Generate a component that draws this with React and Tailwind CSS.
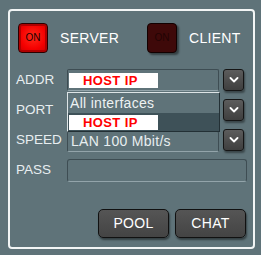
import React from 'react'

const FONT = "font-['Liberation_Sans',Arial,sans-serif]"

function OnButton({ active }) {
  return active ? (
    <div className="w-[30px] h-[30px] rounded-[4px] border border-[#2a0000] bg-[radial-gradient(circle_at_50%_45%,#ff2a1a_0%,#f50000_60%,#c80000_100%)] shadow-[inset_0_0_0_2px_#b00000] flex items-center justify-center">
      <span className="text-[10px] text-[#1a0000] leading-none">ON</span>
    </div>
  ) : (
    <div className="w-[30px] h-[30px] rounded-[4px] border border-[#120000] bg-[#3e0909] shadow-[2px_2px_2px_rgba(0,0,0,0.45)] flex items-center justify-center">
      <span className="text-[10px] text-[#220404] leading-none">ON</span>
    </div>
  )
}

function ArrowButton() {
  return (
    <div className="ml-[4px] w-[21px] h-[22px] rounded-[3px] border border-[#151515] bg-[linear-gradient(#5c5c5c,#3f3f3f)] shadow-[1px_2px_2px_rgba(0,0,0,0.4)] flex items-center justify-center">
      <svg width="10" height="6" viewBox="0 0 10 6">
        <path d="M1.5 1 L5 4.5 L8.5 1" fill="none" stroke="#ffffff" strokeWidth="1.8" strokeLinecap="round" strokeLinejoin="round" />
      </svg>
    </div>
  )
}

function HostIp() {
  return (
    <div className="w-[89px] h-[15px] bg-white flex items-center pl-[14px]">
      <span className="text-[13px] font-bold text-[#ff0000] tracking-[0.4px] leading-none">HOST IP</span>
    </div>
  )
}

function Field({ className, children }) {
  return (
    <div className={`border border-[#3e4d53] border-b-[#93a4aa] rounded-[2px] flex items-center ${className}`}>
      {children}
    </div>
  )
}

function Label({ children }) {
  return <span className="w-[51px] text-[13.5px] text-[#e8eef0]">{children}</span>
}

function PanelButton({ children }) {
  return (
    <button className="w-[71px] h-[29px] rounded-[5px] border border-[#111] bg-[linear-gradient(#555,#444)] shadow-[1px_2px_2px_rgba(0,0,0,0.45)] text-[14px] text-white tracking-[0.3px]">
      {children}
    </button>
  )
}

export default function App() {
  return (
    <div className={`w-[261px] h-[255px] bg-[#5f7379] pt-[9px] pl-[8px] ${FONT}`}>
      <div className="relative w-[247px] h-[240px] border-2 border-[#f2f5f5] rounded-[4px] flex flex-col">
        {/* Mode */}
        <div className="mt-[12px] pl-[8px] h-[30px] flex items-center">
          <div className="w-[129px] flex items-center gap-[12px]">
            <OnButton active />
            <span className="text-[14px] text-white tracking-[0.3px]">SERVER</span>
          </div>
          <div className="flex items-center gap-[12px]">
            <OnButton />
            <span className="text-[14px] text-white tracking-[0.3px]">CLIENT</span>
          </div>
        </div>

        {/* Fields */}
        <div className="mt-[16px] pl-[6px] flex flex-col gap-[8px]">
          <div className="h-[22px] flex items-center">
            <Label>ADDR</Label>
            <Field className="w-[152px] h-[22px] pl-[1px]">
              <HostIp />
            </Field>
            <ArrowButton />
          </div>
          <div className="h-[22px] flex items-center">
            <Label>PORT</Label>
            <Field className="w-[152px] h-[22px]" />
            <ArrowButton />
          </div>
          <div className="h-[22px] flex items-center">
            <Label>SPEED</Label>
            <Field className="w-[152px] h-[21px] mt-[2px] pl-[3px]">
              <span className="text-[14px] text-[#e8eef0] tracking-[0.3px]">LAN 100 Mbit/s</span>
            </Field>
            <ArrowButton />
          </div>
          <div className="h-[23px] flex items-center">
            <Label>PASS</Label>
            <Field className="w-[180px] h-[23px] rounded-[3px]" />
          </div>
        </div>

        {/* Actions */}
        <div className="mt-auto mb-[9px] pr-[7px] flex justify-end gap-[6px]">
          <PanelButton>POOL</PanelButton>
          <PanelButton>CHAT</PanelButton>
        </div>

        {/* Open address list */}
        <div className="absolute left-[57px] top-[81px] w-[153px] h-[40px] bg-[#5f7379] border border-[#dde4e6] border-r-[#233035] border-b-[#233035] flex flex-col">
          <div className="h-[20px] flex items-center pl-[2px]">
            <span className="text-[14px] text-[#eef2f3] tracking-[0.3px]">All interfaces</span>
          </div>
          <div className="flex-1 bg-[#3e5158] flex items-center pl-[1px]">
            <HostIp />
          </div>
        </div>
      </div>
    </div>
  )
}
